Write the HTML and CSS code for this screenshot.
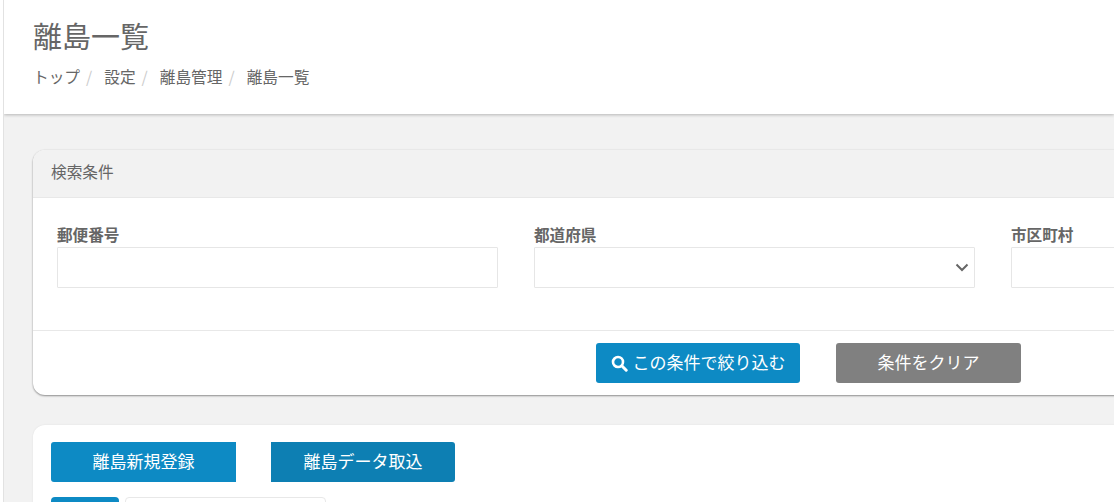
FILE: index.html
```html
<!DOCTYPE html>
<html lang="ja">
<head>
<meta charset="utf-8">
<title>離島一覧</title>
<link rel="stylesheet" href="styles.css">
</head>
<body>
<div class="page">
  <div class="rail"></div>
  <main class="main">
    <header class="page-head">
      <h1 class="title">離島一覧</h1>
      <ol class="crumbs">
        <li class="crumb">トップ</li>
        <li class="crumb">設定</li>
        <li class="crumb">離島管理</li>
        <li class="crumb">離島一覧</li>
      </ol>
    </header>
    <div class="content">
      <section class="card search-card">
        <div class="card-head">検索条件</div>
        <div class="fields">
          <div class="field">
            <label class="label">郵便番号</label>
            <div class="input"></div>
          </div>
          <div class="field">
            <label class="label">都道府県</label>
            <div class="input select">
              <svg class="chevron" width="14" height="9" viewBox="0 0 14 9"><path d="M1.5 1.5 7 7l5.5-5.5" fill="none" stroke="#666" stroke-width="2"/></svg>
            </div>
          </div>
          <div class="field">
            <label class="label">市区町村</label>
            <div class="input"></div>
          </div>
        </div>
        <div class="card-foot">
          <button class="btn btn-search">
            <svg class="search-icon" width="17" height="17" viewBox="0 0 17 17"><circle cx="7" cy="7" r="5" fill="none" stroke="#fff" stroke-width="2.6"/><path d="M10.8 10.8 15.2 15.2" stroke="#fff" stroke-width="3" stroke-linecap="round"/></svg>
            <span class="btn-text">この条件で絞り込む</span>
          </button>
          <button class="btn btn-clear"><span class="btn-text">条件をクリア</span></button>
        </div>
      </section>
      <section class="card list-card">
        <div class="actions">
          <button class="btn btn-new"><span class="btn-text">離島新規登録</span></button>
          <button class="btn btn-import"><span class="btn-text">離島データ取込</span></button>
        </div>
        <div class="pager">
          <div class="pager-btn"></div>
          <div class="pager-box"></div>
        </div>
      </section>
    </div>
  </main>
</div>
</body>
</html>
```
FILE: styles.css
```css
* { box-sizing: border-box; }
html, body { margin: 0; height: 100%; overflow: hidden; }
body {
  font-family: "Noto Sans CJK JP", "Noto Sans", sans-serif;
  color: #666;
  background: #f2f2f2;
}
.page { display: flex; height: 502px; overflow: hidden; }
.rail {
  flex: 0 0 4px;
  background: #fff;
  border-right: 1px solid #e2e2e2;
}
.main { flex: 1; min-width: 0; overflow: hidden; }
.page-head {
  height: 114px;
  padding: 17px 0 0 29px;
  background: #fff;
  box-shadow: 0 1px 3px rgba(0,0,0,.25);
}
.title {
  margin: 0;
  font-size: 29px;
  font-weight: 400;
  line-height: 36px;
  color: #666;
}
.crumbs {
  display: flex;
  margin: 10px 0 0;
  padding: 0;
  list-style: none;
  font-size: 15.7px;
  line-height: 28px;
}
.crumb { margin-right: 6px; white-space: nowrap; }
.crumb:not(:last-child)::after {
  content: "/";
  margin-left: 6px;
  margin-right: 6px;
  color: #ccc;
}
.content { padding: 36px 0 0 29px; width: 1500px; }
.card {
  background: #fff;
  border-radius: 12px;
}
.search-card {
  height: 245px;
  box-shadow: 0 1px 2px rgba(0,0,0,.4), 0 0 2px rgba(0,0,0,.08);
  overflow: hidden;
}
.card-head {
  height: 48px;
  padding: 0 18px;
  font-size: 15.7px;
  line-height: 43px;
  background: #f2f2f2;
  border-bottom: 1px solid #e8e8e8;
}
.fields {
  display: grid;
  grid-template-columns: repeat(3, 441px);
  gap: 36px;
  height: 133px;
  padding: 24px 24px 0;
  border-bottom: 1px solid #e8e8e8;
}
.label {
  display: block;
  height: 25px;
  font-size: 15.6px;
  font-weight: 700;
  line-height: 24px;
}
.input {
  height: 41px;
  background: #fff;
  border: 1px solid #e6e6e6;
  border-radius: 1px;
}
.select {
  display: flex;
  align-items: center;
  justify-content: flex-end;
  padding-right: 4px;
}
.chevron { display: block; margin-right: 1px; }
.card-foot {
  display: flex;
  gap: 36px;
  padding: 12px 0 0 563px;
}
.btn {
  height: 40px;
  padding: 0 0 3px;
  border: 0;
  border-radius: 3px;
  font-family: inherit;
  font-size: 17px;
  line-height: 36px;
  color: #fff;
  text-align: center;
  white-space: nowrap;
}
.btn-search {
  display: flex;
  align-items: center;
  justify-content: center;
  gap: 5px;
  width: 204px;
  background: #0d8ac4;
}
.search-icon { display: block; margin-top: 3px; }
.btn-clear { width: 185px; background: #808080; }
.list-card {
  height: 200px;
  margin-top: 30px;
  padding: 17px 18px 0;
  box-shadow: 0 0 2px rgba(0,0,0,.08);
}
.actions { display: flex; gap: 35px; }
.btn-new {
  width: 185px;
  background: #0d8ac4;
  border-radius: 3px 0 0 3px;
}
.btn-import {
  width: 184px;
  background: #0d7fb3;
  border-radius: 0 3px 3px 0;
}
.pager { display: flex; gap: 6px; margin-top: 15px; }
.pager-btn {
  width: 68px;
  height: 30px;
  background: #0d8ac4;
  border-radius: 4px 4px 0 0;
}
.pager-box {
  width: 201px;
  height: 30px;
  background: #fff;
  border: 1px solid #e8e8e8;
  border-radius: 4px;
}
```
